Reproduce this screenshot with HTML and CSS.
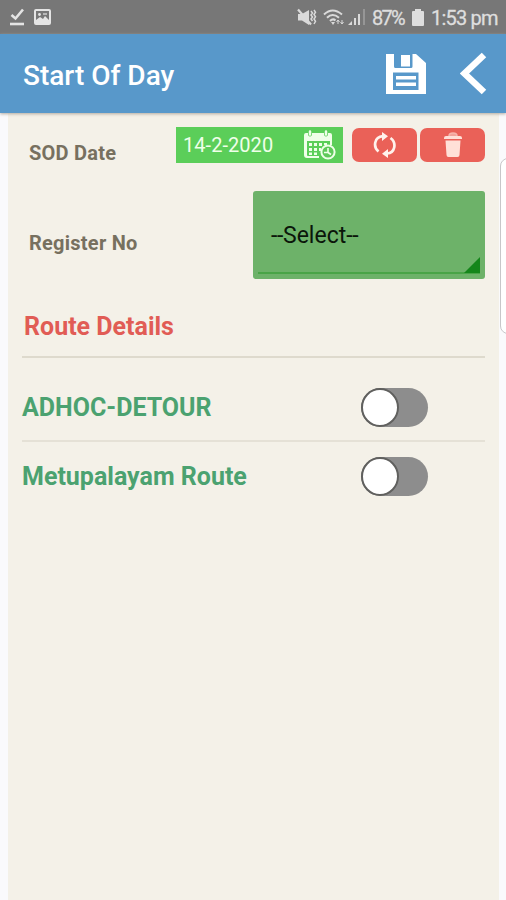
FILE: index.html
```html
<!DOCTYPE html>
<html lang="en">
<head>
<meta charset="utf-8">
<title>Start Of Day</title>
<link rel="stylesheet" href="styles.css">
</head>
<body>
<div class="status">
  <svg class="status-left" width="42" height="18" viewBox="0 0 42 18" fill="none">
    <path d="M1.500 7l4 3.500 7.500-9" stroke="#e4e4e4" stroke-width="2.600"/>
    <path d="M0 16h14" stroke="#e4e4e4" stroke-width="2.600"/>
    <rect x="25" y="2" width="15" height="14" rx="1" stroke="#e4e4e4" stroke-width="2"/>
    <path d="M26 12l4-3 3 2 2-3 5 5v3H26z" fill="#e4e4e4"/>
    <circle cx="29.500" cy="6.500" r="1.400" fill="#e4e4e4"/>
    <path d="M33 6h4" stroke="#e4e4e4" stroke-width="1.200"/>
  </svg>
  <div class="status-right">
    <svg width="70" height="20" viewBox="0 0 70 20" fill="none" stroke="#dadada">
      <path d="M1 6h4l7-4v15l-7-4.500H1z" fill="#dadada" stroke="none"/>
      <path d="M1 1.500l13 15" stroke-width="2.200"/>
      <path d="M14 3l1.500 2-1.500 2 1.500 2-1.500 2 1.500 2M17 2l1.500 2.200L17 6.500l1.500 2.300L17 11l1.500 2.300L17 16" stroke-width="1.500"/>
      <path d="M27 6.500q8.500-8 18 0M30 9.800q5.500-5.500 12 0M33 13q3-3 5.500-.5" stroke-width="2"/>
      <path d="M34 14h4l-2 3z" fill="#dadada" stroke="none"/>
      <path d="M41 16v-4m-1.500 2l1.500-2 1.500 2M45 12v4m-1.500-2l1.500 2 1.500-2" stroke-width="1"/>
      <path d="M51 17l4-4v4zM57 10h2v7h-2zM61 6h2v11h-2z" fill="#dadada" stroke="none"/>
      <path d="M67 1v16" stroke="#a0a0a0" stroke-width="1.500"/>
    </svg>
    <span class="percent">87%</span>
    <svg class="battery" width="12" height="17" viewBox="0 0 12 17"><path d="M3 0h6v2h2q1 0 1 1v13q0 1-1 1H1q-1 0-1-1V3q0-1 1-1h2z" fill="#dedede"/></svg>
    <span class="clock">1:53 pm</span>
  </div>
</div>
<header class="appbar">
  <h1 class="title">Start Of Day</h1>
  <svg class="save" width="40" height="40" viewBox="0 0 40 40">
    <path fill="#fff" fill-rule="evenodd" d="M0 0h8v12.500q0 1.500 1.500 1.500H25q1.500 0 1.500-1.500V0H30l10 9v31H0zM7 18.500h25.500v17.500H7z"/>
    <path fill="#fff" d="M15 1h9v11.500h-9zM10 22h20v3.500H10zM10 28.500h20V32H10z"/>
  </svg>
  <svg class="back" width="27" height="43" viewBox="0 0 27 43"><path d="M24 3L4.500 21.500 24 40" fill="none" stroke="#fff" stroke-width="6.500"/></svg>
</header>
<main class="panel">
  <section class="date-row">
    <span class="label sod">SOD Date</span>
    <div class="date">
      <span class="date-text">14-2-2020</span>
      <svg width="32" height="31" viewBox="0 0 32 31">
        <path fill="#efffe9" fill-rule="evenodd" d="M2 3h2v2q2 3 4 0V3h12v2q2 3 4 0V3h2q2 0 2 2v10h-2v-4H3v14q0 1 1 1h11v2H3q-3 0-3-3V5q0-2 2-2z"/>
        <path stroke="#efffe9" stroke-width="2.500" stroke-linecap="round" d="M6 1.500v3M22 1.500v3"/>
        <path fill="#efffe9" d="M5 13h3v3H5zM10 13h3v3h-3zM15 13h3v3h-3zM20 13h3v2h-3zM5 18h3v3H5zM10 18h3v3h-3zM5 22.500h3v2.500H5zM10 22.500h3v2.500h-3zM15 18h2v3h-2z"/>
        <circle cx="24" cy="22" r="6.600" fill="#5fc95a" stroke="#efffe9" stroke-width="2"/>
        <path d="M24 18v4.500h-4M24 22.500l3 2" stroke="#efffe9" stroke-width="1.600" fill="none"/>
      </svg>
    </div>
    <button class="action refresh" aria-label="Refresh">
      <svg width="24" height="26" viewBox="0 0 24 26" fill="none">
        <path d="M5.500 19.500C0 15 1 5 10 4.200M17.500 6C24 11 22 21 14 21.500" stroke="#fff2ec" stroke-width="2.700"/>
        <path d="M9 0l6 4.200L9 9zM15 17l-6 4.800 6 4.200z" fill="#fff2ec"/>
      </svg>
    </button>
    <button class="action" aria-label="Delete">
      <svg width="18" height="26" viewBox="0 0 18 26"><path fill="#ffe0d8" d="M0 6q0-2 2-2h14q2 0 2 2v1H0zM1.500 8.500h15L15.500 23q0 2-2 2h-9q-2 0-2-2z"/><path d="M5 4q0-3 4-3t4 3" fill="#f2a49b" stroke="#f7b5ac" stroke-width="1.500"/></svg>
    </button>
  </section>
  <section class="register-row">
    <span class="label register">Register No</span>
    <div class="select">
      <span class="dash">--</span><span class="select-text">Select</span><span class="dash">--</span>
      <i class="corner"></i>
    </div>
  </section>
  <h2 class="heading">Route Details</h2>
  <section class="route first"><span>ADHOC-DETOUR</span><span class="switch"><i class="knob"></i></span></section>
  <section class="route"><span>Metupalayam Route</span><span class="switch"><i class="knob"></i></span></section>
</main>
<div class="edge"></div>
</body>
</html>
```
FILE: styles.css
```css
* { box-sizing: border-box; }
body {
  position: relative;
  width: 506px;
  height: 900px;
  margin: 0;
  overflow: hidden;
  background: #fafafc;
  font-family: Roboto, "Liberation Sans", sans-serif;
}
.status {
  display: flex;
  justify-content: space-between;
  height: 34px;
  padding: 8px 9px 0 10px;
  background: #777;
}
.status-right { display: flex; height: 20px; color: #dedede; font-size: 20px; line-height: 21px; }
.percent { width: 34px; margin-left: 5px; letter-spacing: -1.7px; -webkit-text-stroke: .3px #dedede; }
.battery { margin: 1px 7px 0 6px; }
.clock { width: 66px; white-space: nowrap; letter-spacing: -.8px; -webkit-text-stroke: .3px #dedede; }
.appbar {
  position: relative;
  display: flex;
  align-items: center;
  height: 79px;
  padding: 0 19px 0 23px;
  background: #5898ca;
  box-shadow: 0 1px 3px #b3aaa0;
}
.title { flex: 1; margin: 4px 0 0; color: #fff; font-size: 28px; font-weight: 500; line-height: 32px; }
.save { margin-right: 34px; }
.panel {
  width: 491px;
  height: 787px;
  margin-left: 8px;
  padding: 13px 14px 0;
  background: #f4f1e8;
}
.label { color: #77705f; font-size: 20px; font-weight: 700; line-height: 26px; letter-spacing: .25px; }
.date-row { display: flex; align-items: flex-start; height: 65px; }
.sod { width: 154px; padding: 14px 0 0 7px; }
.date {
  display: flex;
  align-items: center;
  justify-content: space-between;
  width: 167px;
  height: 36px;
  margin-top: 1px;
  padding: 0 7px;
  background: #5bce59;
}
.date-text { color: #efffe9; font-size: 20px; letter-spacing: .05px; }
.action {
  display: flex;
  align-items: center;
  justify-content: center;
  width: 65px;
  height: 34px;
  margin: 1px 0 0 3px;
  padding: 0;
  border: 0;
  border-radius: 7px;
  background: #ea6158;
}
.action { margin-top: 2px; }
.refresh { margin-left: 9px; }
.register-row { display: flex; justify-content: space-between; height: 88px; padding-left: 7px; }
.register { padding-top: 39px; }
.select {
  position: relative;
  display: flex;
  align-items: center;
  width: 232px;
  height: 88px;
  padding-left: 18px;
  border-radius: 3px;
  background: #6db269;
  color: #0b160a;
  font-size: 23px;
}
.select::after { content: ""; position: absolute; right: 5px; bottom: 5px; left: 5px; height: 2px; background: #49a447; }
.dash { width: 12px; letter-spacing: -.4px; }
.corner { position: absolute; z-index: 1; right: 5px; bottom: 6px; width: 16px; height: 16px; background: #14861a; clip-path: polygon(100% 0, 100% 100%, 0 100%); }
.heading { height: 79px; margin: 0; padding: 33px 0 0 2px; border-bottom: 2px solid #dedacd; color: #e15c55; font-size: 25px; font-weight: 700; line-height: 30px; }
.route { display: flex; align-items: center; justify-content: space-between; height: 68px; padding-right: 57px; color: #4ba270; font-size: 25px; font-weight: 700; }
.first { height: 84px; padding-top: 17px; border-bottom: 2px solid #e5e1d6; }
.switch { width: 67px; height: 39px; border-radius: 20px; background: #8d8d8d; }
.knob { display: block; width: 38px; height: 39px; border: 2px solid #60605e; border-radius: 50%; background: #fff; }
.edge { position: absolute; left: 500px; top: 158px; width: 20px; height: 176px; border: 1px solid #c7c7c9; border-radius: 8px; background: #fff; }
```
